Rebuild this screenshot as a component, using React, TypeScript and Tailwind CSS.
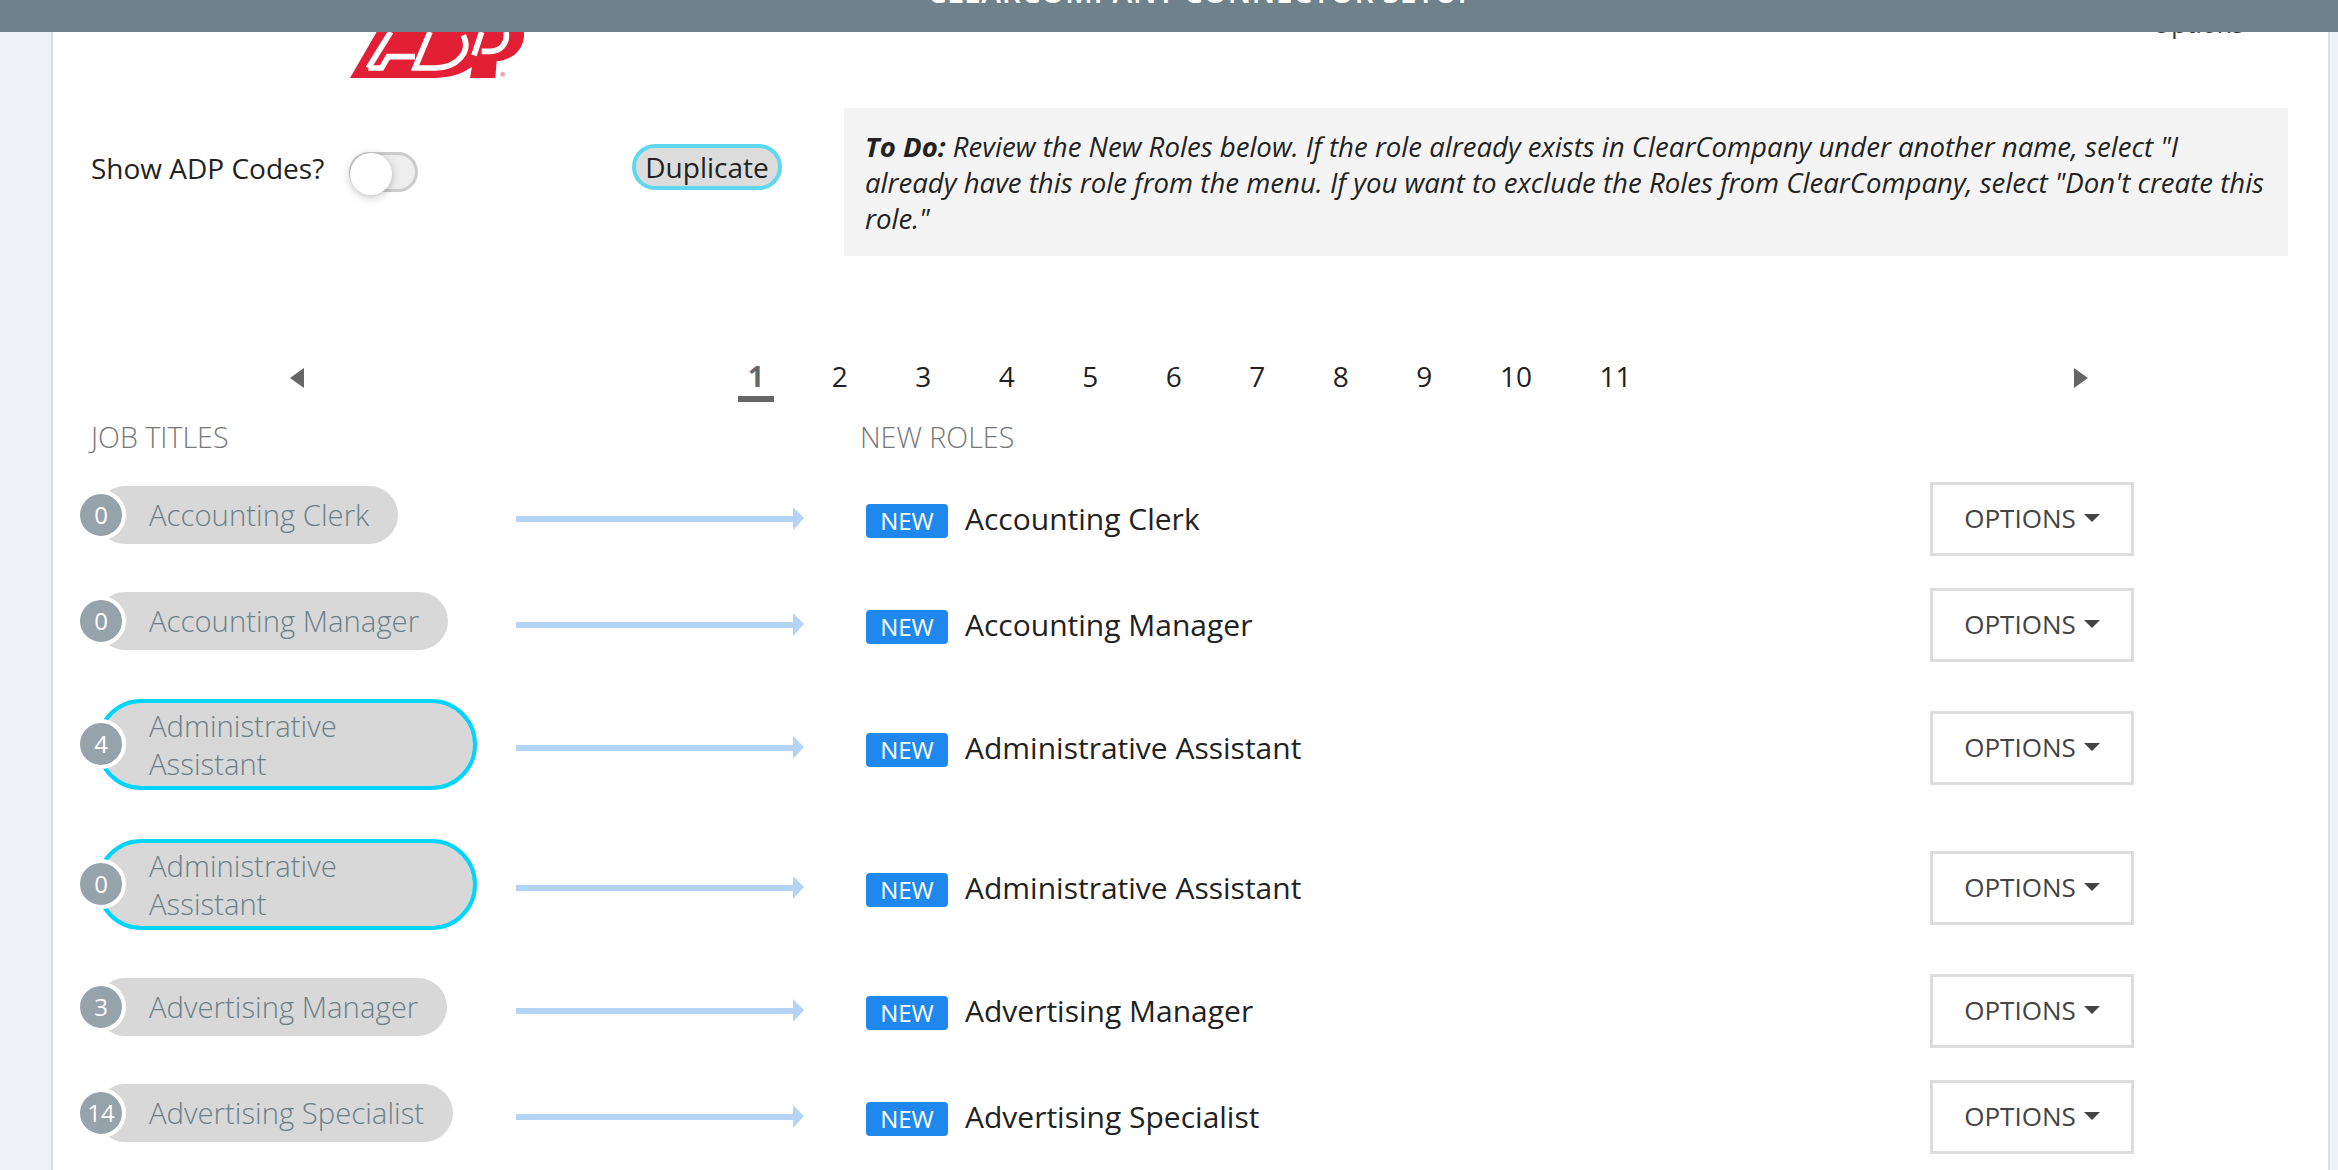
const FONT = "font-['Open_Sans',sans-serif]";

type Role = { count: number; title: string; dup?: boolean };

const roles: Role[] = [
  { count: 0, title: "Accounting Clerk" },
  { count: 0, title: "Accounting Manager" },
  { count: 4, title: "Administrative Assistant", dup: true },
  { count: 0, title: "Administrative Assistant", dup: true },
  { count: 3, title: "Advertising Manager" },
  { count: 14, title: "Advertising Specialist" },
];

const pages = ["2", "3", "4", "5", "6", "7", "8", "9", "10", "11"];

function AdpLogo() {
  return (
    <svg width="175" height="46" viewBox="0 0 525 138" className="shrink-0">
      <path d="M0 138 L80 0 H522 C525 40 500 82 440 88 L436 138 H360 L366 104 C330 130 290 138 240 138 Z" fill="#e21f35" />
      <path d="M55 108 H95 L115 74 H195 M122 0 L55 108" fill="none" stroke="#fff" strokeWidth="17" />
      <path d="M240 0 L195 108 H255 C320 108 365 60 340 10" fill="none" stroke="#fff" strokeWidth="17" />
      <path d="M395 0 L372 70 M395 58 H420 C450 58 475 35 468 0" fill="none" stroke="#fff" strokeWidth="17" />
      <circle cx="458" cy="127" r="7" fill="#f0a0a8" />
    </svg>
  );
}

function Arrow() {
  return (
    <svg width="288" height="24" viewBox="0 0 288 24" className="shrink-0">
      <rect x="0" y="9" width="278" height="6" fill="#b3d3f7" />
      <polygon points="277,0 288,11 277,23" fill="#b3d3f7" />
    </svg>
  );
}

function Row({ role }: { role: Role }) {
  return (
    <div className={`flex items-center ${role.dup ? "h-[140px]" : "h-[106px]"}`}>
      <div className="w-[463px] shrink-0 pl-[43px]">
        <div
          className={`relative mb-2 w-fit max-w-[381px] rounded-[46px] bg-[#d8d8d8] pr-[29px] text-[29.3px] font-light leading-[38px] text-[#6d7f88] ${
            role.dup ? "border-4 border-[#00d4ff] pb-[3px] pl-[49px] pt-[4px]" : "py-[10px] pl-[53px]"
          }`}
        >
          <span
            className={`absolute top-1/2 box-content flex h-[42px] w-[42px] -translate-y-1/2 items-center justify-center rounded-full border-4 border-white bg-[#96a3ab] text-[24px] font-normal leading-none text-white ${
              role.dup ? "-left-[24px]" : "-left-[20px]"
            }`}
          >
            {role.count}
          </span>
          {role.title}
        </div>
      </div>
      <Arrow />
      <span className="ml-[62px] mt-1 flex h-[34px] w-[82px] shrink-0 items-center justify-center rounded-[4px] bg-[#1e88ee] text-[24px] text-white">
        NEW
      </span>
      <span className="ml-[17px] text-[30px] leading-none text-[#222]">{role.title}</span>
      <button className="ml-auto mr-[194px] flex h-[74px] w-[204px] shrink-0 items-center justify-center gap-2 border-[3px] border-[#dddddd] bg-white pb-[2px] text-[26px] text-[#444]">
        OPTIONS
        <svg width="16" height="8" viewBox="0 0 16 8">
          <polygon points="0,0 16,0 8,8" fill="#444" />
        </svg>
      </button>
    </div>
  );
}

export default function App() {
  return (
    <div className={`flex h-[1170px] flex-col overflow-hidden bg-[#eef2f6] ${FONT}`}>
      {/* top bar, page is scrolled so the title is mostly cut off */}
      <header className="relative z-10 flex h-8 shrink-0 justify-center overflow-hidden bg-[#6f818b]">
        <span className="-mt-[28px] ml-[66px] h-fit text-[30px] font-semibold leading-[40px] tracking-[0.6px] text-white">
          CLEARCOMPANY CONNECTOR SETUP
        </span>
      </header>

      <div className="ml-[51px] mr-[8px] flex min-h-0 flex-1 flex-col border-x-[2px] border-[#d9dde0] bg-white">
        <div className="flex h-[46px] shrink-0">
          <div className="ml-[297px]">
            <AdpLogo />
          </div>
          <div className="ml-auto mr-[52px] -mt-[24px] flex h-8 items-center gap-[22px] text-[25px] text-[#333]">
            Options
            <span className="h-0 w-0 border-x-[5px] border-t-[5px] border-x-transparent border-t-[#555]" />
          </div>
        </div>

        <div className="mt-[30px] flex h-[148px] shrink-0">
          <div className="ml-[38px] mt-[44px] flex h-[40px] w-[701px] items-center">
            <span className="-mt-[8px] text-[28px] text-[#222]">Show ADP Codes?</span>
            <span className="relative ml-[25px] h-[40px] w-[69px] rounded-full border-[3px] border-[#cccccc] bg-[#eeeeee]">
              <span className="absolute -left-[2px] -top-[2px] h-[42px] w-[42px] rounded-full bg-white shadow-[0_2px_8px_rgba(0,0,0,0.25)]" />
            </span>
            <span className="-mt-[10px] ml-auto mr-[10px] flex h-[46px] w-[150px] items-center justify-center rounded-full border-4 border-[#5dd8f0] bg-[#dcdcdc] text-[28px] text-[#222]">
              Duplicate
            </span>
          </div>
          <div className="ml-[52px] h-[148px] w-[1444px] shrink-0 bg-[#f4f4f4] pl-[21px] pr-[14px] pt-[20px] text-[27.6px] italic leading-[36px] text-[#222]">
            <b>To Do:</b> Review the New Roles below. If the role already exists in ClearCompany under another name, select "I already have this role from the menu. If you want to exclude the Roles from ClearCompany, select "Don't create this role."
          </div>
        </div>

        <div className="mt-[96px] flex h-[50px] shrink-0 items-start text-[28px] leading-[48px] text-[#222]">
          <svg width="14" height="20" viewBox="0 0 14 20" className="ml-[237px] mt-[16px] shrink-0">
            <polygon points="14,0 0,10 14,20" fill="#666" />
          </svg>
          <span className="ml-[434px] flex h-[50px] w-[36px] justify-center border-b-[6px] border-[#666] font-bold text-[#666]">1</span>
          <div className="ml-[24px] flex">
            {pages.map((p) => (
              <span key={p} className="px-[33.75px]">
                {p}
              </span>
            ))}
          </div>
          <svg width="14" height="20" viewBox="0 0 14 20" className="ml-auto mr-[240px] mt-[16px] shrink-0">
            <polygon points="0,0 14,10 0,20" fill="#666" />
          </svg>
        </div>

        <div className="mt-[17px] flex h-[36px] shrink-0 items-center text-[28.6px] font-light text-[#777]">
          <span className="ml-[38px] w-[769px]">JOB TITLES</span>
          <span>NEW ROLES</span>
        </div>

        <div className="mt-[11px]">
          {roles.map((r, i) => (
            <Row key={i} role={r} />
          ))}
        </div>
      </div>
    </div>
  );
}
